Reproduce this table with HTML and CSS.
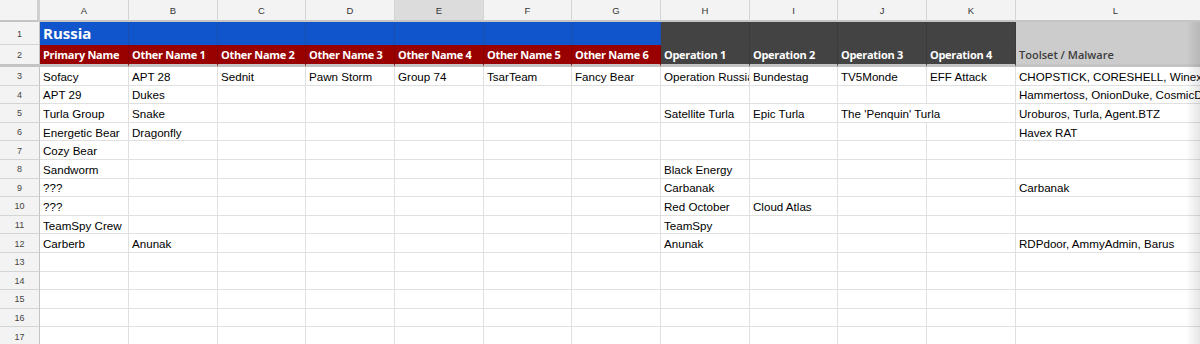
FILE: index.html
```html
<!DOCTYPE html>
<html>
<head>
<meta charset="utf-8">
<link rel="stylesheet" href="styles.css">
</head>
<body>
<div class="sheet">
  <div class="r colhead">
    <div class="corner"></div>
    <div class="ch">A</div><div class="ch">B</div><div class="ch">C</div><div class="ch">D</div>
    <div class="ch sel">E</div><div class="ch">F</div><div class="ch">G</div><div class="ch">H</div>
    <div class="ch">I</div><div class="ch">J</div><div class="ch">K</div><div class="ch">L</div>
  </div>
  <div class="r row1">
    <div class="rh">1</div>
    <div class="c blue title">Russia</div>
    <div class="c blue"></div><div class="c blue"></div><div class="c blue"></div>
    <div class="c blue"></div><div class="c blue"></div><div class="c blue"></div>
    <div class="c dark"></div><div class="c dark"></div><div class="c dark"></div><div class="c dark"></div>
    <div class="c light"></div>
  </div>
  <div class="r row2">
    <div class="rh">2</div>
    <div class="c red hd">Primary Name</div>
    <div class="c red hd">Other Name 1</div>
    <div class="c red hd">Other Name 2</div>
    <div class="c red hd">Other Name 3</div>
    <div class="c red hd">Other Name 4</div>
    <div class="c red hd">Other Name 5</div>
    <div class="c red hd">Other Name 6</div>
    <div class="c dark hd">Operation 1</div>
    <div class="c dark hd">Operation 2</div>
    <div class="c dark hd">Operation 3</div>
    <div class="c dark hd">Operation 4</div>
    <div class="c light hd tool">Toolset / Malware</div>
  </div>
  <div class="r">
    <div class="rh">3</div>
    <div class="c">Sofacy</div><div class="c">APT 28</div><div class="c">Sednit</div><div class="c">Pawn Storm</div>
    <div class="c">Group 74</div><div class="c">TsarTeam</div><div class="c">Fancy Bear</div><div class="c">Operation Russia</div>
    <div class="c">Bundestag</div><div class="c">TV5Monde</div><div class="c">EFF Attack</div><div class="c">CHOPSTICK, CORESHELL, Winexe</div>
  </div>
  <div class="r">
    <div class="rh">4</div>
    <div class="c">APT 29</div><div class="c">Dukes</div><div class="c"></div><div class="c"></div>
    <div class="c"></div><div class="c"></div><div class="c"></div><div class="c"></div>
    <div class="c"></div><div class="c"></div><div class="c"></div><div class="c">Hammertoss, OnionDuke, CosmicDuke</div>
  </div>
  <div class="r">
    <div class="rh">5</div>
    <div class="c">Turla Group</div><div class="c">Snake</div><div class="c"></div><div class="c"></div>
    <div class="c"></div><div class="c"></div><div class="c"></div><div class="c">Satellite Turla</div>
    <div class="c">Epic Turla</div><div class="c span2">The 'Penquin' Turla</div><div class="c">Uroburos, Turla, Agent.BTZ</div>
  </div>
  <div class="r">
    <div class="rh">6</div>
    <div class="c">Energetic Bear</div><div class="c">Dragonfly</div><div class="c"></div><div class="c"></div>
    <div class="c"></div><div class="c"></div><div class="c"></div><div class="c"></div>
    <div class="c"></div><div class="c"></div><div class="c"></div><div class="c">Havex RAT</div>
  </div>
  <div class="r">
    <div class="rh">7</div>
    <div class="c">Cozy Bear</div><div class="c"></div><div class="c"></div><div class="c"></div>
    <div class="c"></div><div class="c"></div><div class="c"></div><div class="c"></div>
    <div class="c"></div><div class="c"></div><div class="c"></div><div class="c"></div>
  </div>
  <div class="r">
    <div class="rh">8</div>
    <div class="c">Sandworm</div><div class="c"></div><div class="c"></div><div class="c"></div>
    <div class="c"></div><div class="c"></div><div class="c"></div><div class="c">Black Energy</div>
    <div class="c"></div><div class="c"></div><div class="c"></div><div class="c"></div>
  </div>
  <div class="r">
    <div class="rh">9</div>
    <div class="c">???</div><div class="c"></div><div class="c"></div><div class="c"></div>
    <div class="c"></div><div class="c"></div><div class="c"></div><div class="c">Carbanak</div>
    <div class="c"></div><div class="c"></div><div class="c"></div><div class="c">Carbanak</div>
  </div>
  <div class="r">
    <div class="rh">10</div>
    <div class="c">???</div><div class="c"></div><div class="c"></div><div class="c"></div>
    <div class="c"></div><div class="c"></div><div class="c"></div><div class="c">Red October</div>
    <div class="c">Cloud Atlas</div><div class="c"></div><div class="c"></div><div class="c"></div>
  </div>
  <div class="r">
    <div class="rh">11</div>
    <div class="c">TeamSpy Crew</div><div class="c"></div><div class="c"></div><div class="c"></div>
    <div class="c"></div><div class="c"></div><div class="c"></div><div class="c">TeamSpy</div>
    <div class="c"></div><div class="c"></div><div class="c"></div><div class="c"></div>
  </div>
  <div class="r">
    <div class="rh">12</div>
    <div class="c">Carberb</div><div class="c">Anunak</div><div class="c"></div><div class="c"></div>
    <div class="c"></div><div class="c"></div><div class="c"></div><div class="c">Anunak</div>
    <div class="c"></div><div class="c"></div><div class="c"></div><div class="c">RDPdoor, AmmyAdmin, Barus</div>
  </div>
  <div class="r">
    <div class="rh">13</div>
    <div class="c"></div><div class="c"></div><div class="c"></div><div class="c"></div>
    <div class="c"></div><div class="c"></div><div class="c"></div><div class="c"></div>
    <div class="c"></div><div class="c"></div><div class="c"></div><div class="c"></div>
  </div>
  <div class="r">
    <div class="rh">14</div>
    <div class="c"></div><div class="c"></div><div class="c"></div><div class="c"></div>
    <div class="c"></div><div class="c"></div><div class="c"></div><div class="c"></div>
    <div class="c"></div><div class="c"></div><div class="c"></div><div class="c"></div>
  </div>
  <div class="r">
    <div class="rh">15</div>
    <div class="c"></div><div class="c"></div><div class="c"></div><div class="c"></div>
    <div class="c"></div><div class="c"></div><div class="c"></div><div class="c"></div>
    <div class="c"></div><div class="c"></div><div class="c"></div><div class="c"></div>
  </div>
  <div class="r">
    <div class="rh">16</div>
    <div class="c"></div><div class="c"></div><div class="c"></div><div class="c"></div>
    <div class="c"></div><div class="c"></div><div class="c"></div><div class="c"></div>
    <div class="c"></div><div class="c"></div><div class="c"></div><div class="c"></div>
  </div>
  <div class="r">
    <div class="rh">17</div>
    <div class="c"></div><div class="c"></div><div class="c"></div><div class="c"></div>
    <div class="c"></div><div class="c"></div><div class="c"></div><div class="c"></div>
    <div class="c"></div><div class="c"></div><div class="c"></div><div class="c"></div>
  </div>
  <div class="fade"></div>
</div>
</body>
</html>
```

FILE: styles.css
```css
html, body {
  margin: 0;
  padding: 0;
  background: #ffffff;
  overflow: hidden;
  width: 1200px;
  height: 344px;
}

.sheet {
  position: relative;
  width: 1216px;
  font-family: "Liberation Sans", Arial, sans-serif;
  color: #000;
}

.r {
  display: grid;
  grid-template-columns: 40px 89px 89px 88px 89px 89px 88px 89px 89px 88px 89px 89px 200px;
  height: 18.6px;
}

.c {
  box-sizing: border-box;
  border-right: 1px solid #e0e0e0;
  border-bottom: 1px solid #e0e0e0;
  padding: 0 3px;
  font-size: 11.6px;
  white-space: nowrap;
  overflow: hidden;
  display: flex;
  align-items: center;
  padding-top: 1px;
}

.span2 {
  grid-column: span 2;
}

.rh {
  box-sizing: border-box;
  background: #f3f3f3;
  border-right: 1px solid #c4c4c4;
  border-bottom: 1px solid #d4d4d4;
  font-size: 9px;
  color: #444;
  display: flex;
  align-items: center;
  justify-content: center;
  padding-top: 1px;
}

/* column header */
.colhead {
  height: 22px;
}

.corner {
  box-sizing: border-box;
  background: #f3f3f3;
  border-right: 3px solid #cfcfcf;
  border-bottom: 2px solid #c4c4c4;
}

.ch {
  box-sizing: border-box;
  background: #f3f3f3;
  border-right: 1px solid #d4d4d4;
  border-bottom: 2px solid #c4c4c4;
  font-size: 9.5px;
  color: #333;
  display: flex;
  align-items: center;
  justify-content: center;
}

.ch.sel {
  background: #dcdcdc;
}

/* frozen header rows */
.row1 {
  height: 23px;
}

.row2 {
  height: 22px;
}

.row2 .rh,
.row2 .c {
  border-bottom: 3px solid #c4c4c4;
}

.blue {
  background: #1155cc;
  border-right-color: #1a4fb0;
  border-bottom-color: #1155cc;
}

.red {
  background: #990000;
  border-right-color: #880000;
}

.dark {
  background: #434343;
  border-right-color: #3a3a3a;
}

.row1 .dark {
  border-bottom-color: #434343;
}

.light {
  background: #cccccc;
  border-right-color: #c4c4c4;
}

.row1 .light {
  border-bottom-color: #cccccc;
}

.title {
  font-family: "Open Sans", "Noto Sans", sans-serif;
  font-weight: 700;
  font-size: 15px;
  color: #ffffff;
  padding-top: 0;
}

.hd {
  font-family: "Open Sans", "Noto Sans", sans-serif;
  font-weight: 700;
  font-size: 11px;
  letter-spacing: -0.3px;
  color: #ffffff;
  padding-top: 0;
}

.hd.tool {
  font-weight: 600;
  font-size: 11px;
  letter-spacing: 0;
  color: #3c3c3c;
}

.fade {
  position: absolute;
  top: 22px;
  left: 1186px;
  width: 14px;
  height: 330px;
  background: linear-gradient(to right, rgba(0, 0, 0, 0), rgba(0, 0, 0, 0.10));
  pointer-events: none;
}
```
